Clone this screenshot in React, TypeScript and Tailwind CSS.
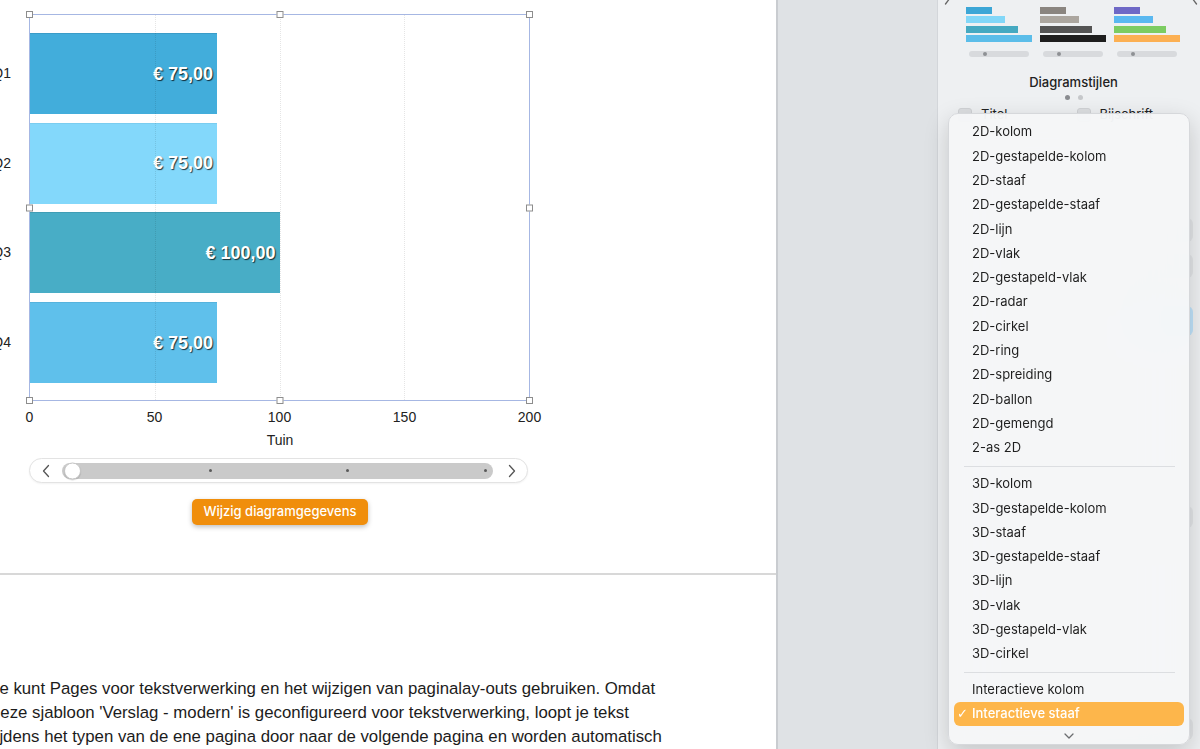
import React from "react";

const bars = [
  { label: "Q1", value: 75, text: "€ 75,00", color: "#42addb", edge: "#3a9cc8" },
  { label: "Q2", value: 75, text: "€ 75,00", color: "#83d8fb", edge: "#7acdf0" },
  { label: "Q3", value: 100, text: "€ 100,00", color: "#48adc6", edge: "#3f9db5" },
  { label: "Q4", value: 75, text: "€ 75,00", color: "#5fc0eb", edge: "#56b3dd" },
];

const group2D = [
  "2D-kolom",
  "2D-gestapelde-kolom",
  "2D-staaf",
  "2D-gestapelde-staaf",
  "2D-lijn",
  "2D-vlak",
  "2D-gestapeld-vlak",
  "2D-radar",
  "2D-cirkel",
  "2D-ring",
  "2D-spreiding",
  "2D-ballon",
  "2D-gemengd",
  "2-as 2D",
];

const group3D = [
  "3D-kolom",
  "3D-gestapelde-kolom",
  "3D-staaf",
  "3D-gestapelde-staaf",
  "3D-lijn",
  "3D-vlak",
  "3D-gestapeld-vlak",
  "3D-cirkel",
];

const thumbs = [
  ["#3ca6d6", "#82d7f8", "#45a9c1", "#5bbde9"],
  ["#8a8580", "#aba69f", "#545454", "#1e1e1e"],
  ["#6e68c6", "#5ab8f0", "#7ccc62", "#fcb053"],
];
const thumbWidths = [26, 39, 52, 66];

function Handle({ className }: { className: string }) {
  return <div className={"absolute w-[7px] h-[7px] bg-white border border-[#8d8d8d] z-20 " + className} />;
}

function MenuItem({ text }: { text: string }) {
  return (
    <div className="h-[24.3px] shrink-0 flex items-center pl-[23px] text-[13px] text-[#1f1f1f] whitespace-nowrap">{text}</div>
  );
}

function Sep() {
  return (
    <div className="h-[11.7px] shrink-0 flex items-center pl-[15px] pr-[14px]">
      <div className="h-px w-full bg-[#dcdee1]" />
    </div>
  );
}

export default function App() {
  return (
    <div className="relative w-[1200px] h-[749px] overflow-hidden flex font-['Liberation_Sans',Arial,sans-serif]">
      {/* Document page */}
      <div className="w-[776px] shrink-0 bg-white flex flex-col overflow-hidden">
        <div className="h-[575px] shrink-0 border-b-2 border-[#d8d8d8] flex flex-col pt-[14px]">
          <div className="flex">
            {/* Y labels */}
            <div className="w-[29px] shrink-0 flex flex-col gap-[8.7px] pt-[19px]">
              {bars.map((b) => (
                <div key={b.label} className="h-[81px] flex items-center justify-end pr-[18px] text-[14px] text-[#222] whitespace-nowrap">
                  {b.label}
                </div>
              ))}
            </div>
            {/* Plot frame */}
            <div className="relative w-[501px] h-[387px] border border-[#a6b7e3]">
              <div className="flex flex-col gap-[8.7px] pt-[18px]">
                {bars.map((b) => (
                  <div
                    key={b.label}
                    className="h-[81px] flex items-center justify-end pr-[4px] border-t"
                    style={{ width: `${(b.value / 200) * 100}%`, backgroundColor: b.color, borderColor: b.edge }}
                  >
                    <span className="text-white font-bold text-[18px] whitespace-nowrap [text-shadow:1px_1px_1px_rgba(0,0,0,0.75)]">
                      {b.text}
                    </span>
                  </div>
                ))}
              </div>
              <div className="absolute top-0 bottom-0 left-1/4 border-l border-dotted border-[rgba(0,0,0,0.1)] z-10" />
              <div className="absolute top-0 bottom-0 left-1/2 border-l border-dotted border-[rgba(0,0,0,0.1)] z-10" />
              <div className="absolute top-0 bottom-0 left-3/4 border-l border-dotted border-[rgba(0,0,0,0.1)] z-10" />
              <Handle className="top-[-4px] left-[-4px]" />
              <Handle className="top-[-4px] left-1/2 -translate-x-1/2" />
              <Handle className="top-[-4px] right-[-4px]" />
              <Handle className="top-1/2 -translate-y-1/2 left-[-4px]" />
              <Handle className="top-1/2 -translate-y-1/2 right-[-4px]" />
              <Handle className="bottom-[-4px] left-[-4px]" />
              <Handle className="bottom-[-4px] left-1/2 -translate-x-1/2" />
              <Handle className="bottom-[-4px] right-[-4px]" />
            </div>
          </div>
          {/* X labels */}
          <div className="ml-[-33px] mt-[8px] w-[625px] grid grid-cols-5 text-center text-[14px] leading-[16px] text-[#222]">
            <span>0</span>
            <span>50</span>
            <span>100</span>
            <span>150</span>
            <span>200</span>
          </div>
          <div className="w-[560px] mt-[7px] text-center text-[14px] leading-[16px] text-[#222]">Tuin</div>
          {/* Scroller */}
          <div className="ml-[29px] mt-[10px] w-[499px] h-[25px] rounded-full border border-[#e3e3e3] bg-white flex items-center pl-[11px] shadow-[0_1px_2px_rgba(0,0,0,0.05)]">
            <svg width="10" height="14" viewBox="0 0 10 14" className="shrink-0">
              <path d="M7.5 1.5 L2.5 7 L7.5 12.5" fill="none" stroke="#555" strokeWidth="1.3" strokeLinecap="round" strokeLinejoin="round" />
            </svg>
            <div className="ml-[11px] w-[431px] h-[16px] rounded-full bg-[#cacaca] relative shrink-0">
              <div className="absolute left-[2px] top-1/2 -translate-y-1/2 w-[17px] h-[17px] rounded-full bg-white border border-[#c4c4c4] shadow-[0_1px_1px_rgba(0,0,0,0.15)]" />
              <div className="absolute left-[147px] top-[6.5px] w-[3px] h-[3px] rounded-full bg-[#5a5a5a]" />
              <div className="absolute left-[284px] top-[6.5px] w-[3px] h-[3px] rounded-full bg-[#5a5a5a]" />
              <div className="absolute left-[422px] top-[6.5px] w-[3px] h-[3px] rounded-full bg-[#5a5a5a]" />
            </div>
            <svg width="10" height="14" viewBox="0 0 10 14" className="shrink-0 ml-[14px]">
              <path d="M2.5 1.5 L7.5 7 L2.5 12.5" fill="none" stroke="#555" strokeWidth="1.3" strokeLinecap="round" strokeLinejoin="round" />
            </svg>
          </div>
          {/* Button */}
          <div className="ml-[192px] mt-[16px] w-[176px] h-[26px] rounded-[5px] bg-[#f08e0c] flex items-center justify-center text-white text-[13px] font-medium font-['Inter',sans-serif] shadow-[0_2px_5px_rgba(0,0,0,0.25)]">
            Wijzig diagramgegevens
          </div>
        </div>
        <div className="pt-[102px] ml-[-9px] text-[16.8px] leading-[24px] text-[#1c1c1c] whitespace-nowrap">
          Je kunt Pages voor tekstverwerking en het wijzigen van paginalay-outs gebruiken. Omdat
          <br />
          deze sjabloon 'Verslag - modern' is geconfigureerd voor tekstverwerking, loopt je tekst
          <br />
          tijdens het typen van de ene pagina door naar de volgende pagina en worden automatisch
          <br />
          nieuwe pagina's aangemaakt.
        </div>
      </div>

      {/* Grey gutter */}
      <div className="w-[161px] shrink-0 bg-[#dfe2e5] border-l-2 border-[#c9ccd0]" />

      {/* Sidebar */}
      <div className="relative w-[263px] shrink-0 bg-[#eef0f2] border-l border-[#d3d6da] font-['Inter',sans-serif] flex flex-col">
        <svg width="8" height="6" viewBox="0 0 8 6" className="absolute left-[6px] top-0">
          <path d="M6 -2 L1.5 4" fill="none" stroke="#666" strokeWidth="1.3" strokeLinecap="round" />
        </svg>
        <svg width="8" height="6" viewBox="0 0 8 6" className="absolute right-[2px] top-0">
          <path d="M2 -2 L6.5 4" fill="none" stroke="#666" strokeWidth="1.3" strokeLinecap="round" />
        </svg>
        <div className="ml-[28px] w-[215px] pt-[7px] flex flex-col">
          <div className="flex gap-[7.5px]">
            {thumbs.map((cols, i) => (
              <div key={i} className="w-[67px] flex flex-col">
                <div className="flex flex-col gap-[2.3px]">
                  {cols.map((c, j) => (
                    <div key={j} className="h-[7px]" style={{ width: thumbWidths[j], backgroundColor: c }} />
                  ))}
                </div>
                <div className="mt-[9px] ml-[3px] w-[60px] h-[6px] rounded-full bg-[#d8dadd] relative">
                  <div className="absolute left-[14px] top-[1px] w-[4px] h-[4px] rounded-full bg-[#8e9094]" />
                </div>
              </div>
            ))}
          </div>
          <div className="mt-[17px] text-center text-[13px] leading-[16px] font-medium text-[#222]">Diagramstijlen</div>
          <div className="mt-[5px] flex justify-center gap-[8px]">
            <div className="w-[5px] h-[5px] rounded-full bg-[#8a8c90]" />
            <div className="w-[5px] h-[5px] rounded-full bg-[#c6c8cb]" />
          </div>
        </div>
        <div className="mt-[5px] flex items-center pl-[20px] text-[13px] text-[#222]">
          <div className="w-[14px] h-[14px] rounded-[3px] bg-[#dcdee1] border border-[#d0d2d5]" />
          <span className="ml-[9px]">Titel</span>
          <div className="ml-[70px] w-[14px] h-[14px] rounded-[3px] bg-[#dcdee1] border border-[#d0d2d5]" />
          <span className="ml-[8px]">Bijschrift</span>
        </div>
        {/* content hidden under the menu */}
        <div className="mt-[16px] ml-[150px] w-[100px] h-[12px] rounded bg-[#dfe1e4]" />
        <div className="mt-[66px] ml-[150px] w-[105px] h-[24px] rounded-[6px] bg-[#e2e4e7]" />
        <div className="mt-[12px] ml-[150px] w-[105px] h-[24px] rounded-[6px] bg-[#e2e4e7]" />
        <div className="mt-[28px] ml-[190px] w-[65px] h-[30px] rounded-[6px] bg-[#bfe2fa]" />
        <div className="mt-[170px] ml-[150px] w-[105px] h-[22px] rounded-[6px] bg-[#e2e4e7]" />
        <div className="mt-[190px] ml-[150px] w-[105px] h-[22px] rounded-[6px] bg-[#e2e4e7]" />
      </div>

      {/* Chart type menu */}
      <div className="absolute left-[948px] top-[113px] w-[242px] h-[632px] rounded-[10px] bg-[rgba(245,246,248,0.93)] backdrop-blur-xl border border-[#d6d8db] shadow-[0_8px_24px_rgba(0,0,0,0.18)] font-['Inter',sans-serif] pt-[6px] flex flex-col overflow-hidden">
        {group2D.map((t) => (
          <MenuItem key={t} text={t} />
        ))}
        <Sep />
        {group3D.map((t) => (
          <MenuItem key={t} text={t} />
        ))}
        <Sep />
        <MenuItem text="Interactieve kolom" />
        <div className="mx-[5px] h-[24px] shrink-0 rounded-[6px] bg-[#fdb64b] flex items-center pl-[3px] text-white text-[13px] font-medium whitespace-nowrap">
          <span className="w-[15px] font-['DejaVu_Sans',sans-serif] text-[13px] font-bold">✓</span>
          <span>Interactieve staaf</span>
        </div>
        <div className="h-[20px] shrink-0 flex items-center justify-center">
          <svg width="12" height="8" viewBox="0 0 12 8">
            <path d="M2 2 L6 6 L10 2" fill="none" stroke="#6b6d70" strokeWidth="1.3" strokeLinecap="round" strokeLinejoin="round" />
          </svg>
        </div>
      </div>
    </div>
  );
}
